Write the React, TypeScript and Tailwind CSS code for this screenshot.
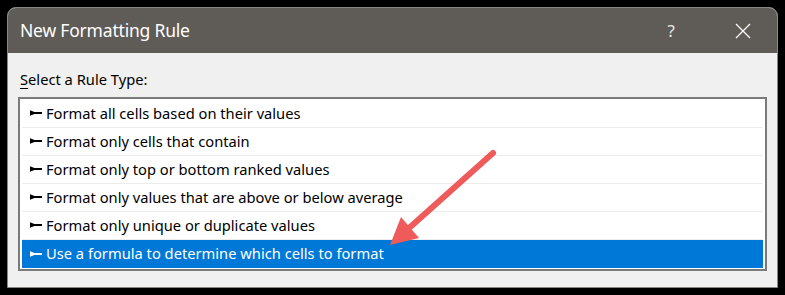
import React from 'react';

const rules = [
  'Format all cells based on their values',
  'Format only cells that contain',
  'Format only top or bottom ranked values',
  'Format only values that are above or below average',
  'Format only unique or duplicate values',
  'Use a formula to determine which cells to format',
];

function Bullet({ light }: { light?: boolean }) {
  return (
    <svg width="12" height="6" viewBox="0 0 12 6" className="shrink-0">
      <path d="M0 0.3 L4.5 2.1 L12 2.1 L12 3.9 L4.5 3.9 L0 5.7 Z" fill={light ? '#ffffff' : '#000000'} />
    </svg>
  );
}

export default function App() {
  return (
    <div className="relative w-[785px] h-[295px] bg-black pt-[7px] pl-[7px] overflow-hidden" style={{ fontFamily: '"Noto Sans", "Open Sans", sans-serif' }}>
      <div className="w-[771px] h-[281px] flex flex-col rounded-t-[9px] overflow-hidden border border-[#8a8784] bg-[#f0f0f0]">
        {/* Title bar */}
        <div className="h-[45px] shrink-0 bg-[#5f5b57] flex items-center pl-[12px] pr-[26px] text-white">
          <span className="text-[17.5px] leading-none tracking-[-0.2px]">New Formatting Rule</span>
          <span className="ml-auto mr-[60px] text-[17px] leading-none text-[#e8e8e8]">?</span>
          <svg width="16" height="16" viewBox="0 0 16 16">
            <path d="M1 1 L15 15 M15 1 L1 15" stroke="#ffffff" strokeWidth="1.3" />
          </svg>
        </div>

        {/* Body */}
        <div className="flex-1 pl-[10px] pr-[10px] pt-[19px]">
          <div className="text-[14.7px] leading-none text-black pl-[2px]">
            <span className="underline underline-offset-[3px]">S</span>elect a Rule Type:
          </div>
          <div className="mt-[10px] w-[749px] border-2 border-[#7a7a7a] bg-white px-[2px] pt-[1px] pb-[1px]">
            {rules.map((r, i) => {
              const sel = i === rules.length - 1;
              return (
                <div
                  key={r}
                  className={
                    sel
                      ? 'h-[28px] flex items-center gap-[4px] pl-[8px] bg-[#0078d7] text-white text-[14.7px]'
                      : 'h-[28px] flex items-center gap-[4px] pl-[8px] border-b border-[#ececec] text-black text-[14.7px]'
                  }
                >
                  <Bullet light={sel} />
                  <span className="leading-none">{r}</span>
                </div>
              );
            })}
          </div>
        </div>
      </div>

      {/* Red annotation arrow */}
      <svg className="absolute left-0 top-0 pointer-events-none" width="785" height="295" viewBox="0 0 785 295">
        <line x1="493" y1="153" x2="408" y2="229" stroke="#ef5b5b" strokeWidth="6" strokeLinecap="round" />
        <polygon points="390,245 401,217 419,238" fill="#ef5b5b" />
      </svg>
    </div>
  );
}
